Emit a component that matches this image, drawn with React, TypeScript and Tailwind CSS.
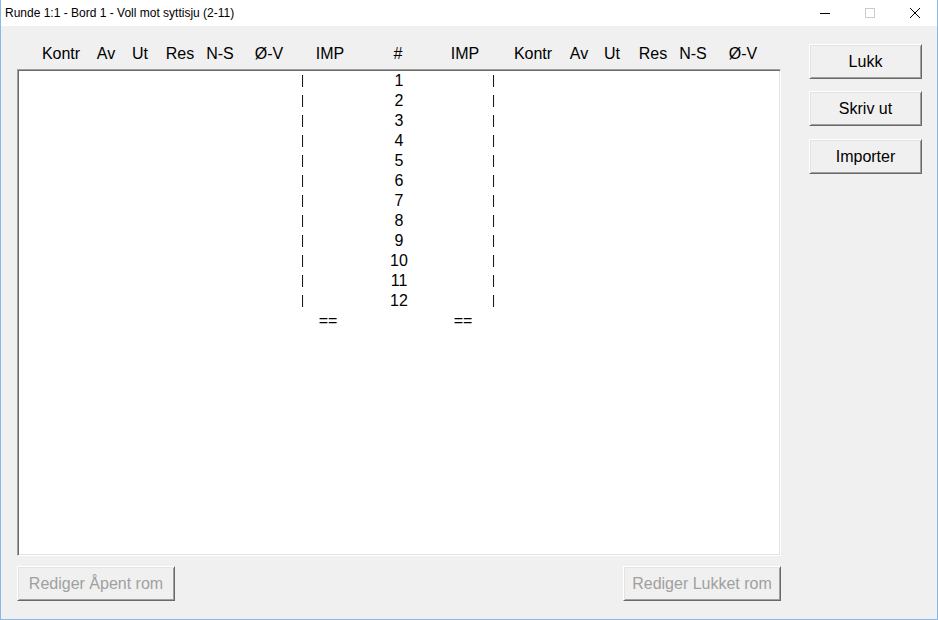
import React from 'react';

const leftHeaders: [string, number][] = [
  ['Kontr', 44],
  ['Av', 45],
  ['Ut', 34],
  ['Res', 40],
  ['N-S', 40],
  ['Ø-V', 49],
  ['IMP', 61],
  ['#', 68],
  ['IMP', 67],
  ['Kontr', 68],
  ['Av', 46],
  ['Ut', 33],
  ['Res', 41],
  ['N-S', 40],
  ['Ø-V', 50],
];

const rows = Array.from({ length: 12 }, (_, i) => i + 1);

// zero-width anchor: text is centred on the anchor point
function Anchor({ offset, children, className = '' }: { offset: number; children: React.ReactNode; className?: string }) {
  return (
    <div className={`w-0 flex justify-center whitespace-nowrap ${className}`} style={{ marginLeft: offset }}>
      {children}
    </div>
  );
}

function Bar({ offset }: { offset: number }) {
  return (
    <span
      className="w-[4px] shrink-0 text-[12px] leading-[20px] relative -top-px will-change-transform"
      style={{ marginLeft: offset }}
    >
      |
    </span>
  );
}

function WinButton({ children, disabled = false, className = '' }: { children: React.ReactNode; disabled?: boolean; className?: string }) {
  return (
    <button
      className={`h-[35px] bg-[#f0f0f0] border border-t-white border-l-white border-r-[#696969] border-b-[#696969] shadow-[inset_1px_1px_0_#e3e3e3,inset_-1px_-1px_0_#a0a0a0] text-[16px] leading-none ${
        disabled ? 'text-[#a0a0a0]' : 'text-black'
      } ${className}`}
    >
      {children}
    </button>
  );
}

export default function App() {
  return (
    <div
      className="w-[938px] h-[620px] flex flex-col bg-[#f0f0f0] border-x border-b border-[#88b9e8] overflow-hidden"
      style={{ fontFamily: '"Liberation Sans", Arial, sans-serif' }}
    >
      {/* Title bar */}
      <div className="h-[26px] bg-white flex items-center shrink-0">
        <span className="pl-[4px] text-[12px] text-black">Runde 1:1 - Bord 1 - Voll mot syttisju (2-11)</span>
        <div className="ml-auto flex h-full">
          <div className="w-[45px] flex items-center justify-center">
            <svg width="10" height="10" viewBox="0 0 10 10">
              <path d="M0 5.5h10" stroke="#000" strokeWidth="1" />
            </svg>
          </div>
          <div className="w-[45px] flex items-center justify-center">
            <svg width="10" height="10" viewBox="0 0 10 10">
              <rect x="0.5" y="0.5" width="9" height="9" fill="none" stroke="#cccccc" />
            </svg>
          </div>
          <div className="w-[45px] flex items-center justify-center">
            <svg width="10" height="10" viewBox="0 0 10 10">
              <path d="M0 0L10 10M10 0L0 10" stroke="#000" strokeWidth="1" />
            </svg>
          </div>
        </div>
      </div>

      {/* Body */}
      <div className="flex flex-1 text-black text-[16px]">
        <div className="ml-[16px] w-[764px] flex flex-col">
          {/* Column headers */}
          <div className="mt-[18px] h-[20px] flex items-center leading-[20px]">
            {leftHeaders.map(([label, off], i) => (
              <Anchor key={i} offset={off}>
                {label}
              </Anchor>
            ))}
          </div>

          {/* List box */}
          <div className="mt-[5px] h-[487px] bg-white border border-t-[#a0a0a0] border-l-[#a0a0a0] border-r-white border-b-white shadow-[inset_1px_1px_0_#696969,inset_-1px_-1px_0_#e3e3e3] pt-[1px] pl-[1px]">
            {rows.map((n) => (
              <div key={n} className="h-[20px] flex items-center leading-[20px]">
                <Bar offset={282} />
                <Anchor offset={94}>{n}</Anchor>
                <Bar offset={93} />
              </div>
            ))}
            <div className="h-[20px] flex items-center leading-[20px]">
              <Anchor offset={309}>==</Anchor>
              <Anchor offset={135}>==</Anchor>
            </div>
          </div>

          {/* Bottom buttons */}
          <div className="mt-[10px] flex justify-between">
            <WinButton disabled className="w-[158px]">Rediger Åpent rom</WinButton>
            <WinButton disabled className="w-[158px]">Rediger Lukket rom</WinButton>
          </div>
        </div>

        {/* Right buttons */}
        <div className="ml-[28px] mt-[18px] flex flex-col">
          <WinButton className="w-[113px]">Lukk</WinButton>
          <WinButton className="w-[113px] mt-[12px]">Skriv ut</WinButton>
          <WinButton className="w-[113px] mt-[13px]">Importer</WinButton>
        </div>
      </div>
    </div>
  );
}
